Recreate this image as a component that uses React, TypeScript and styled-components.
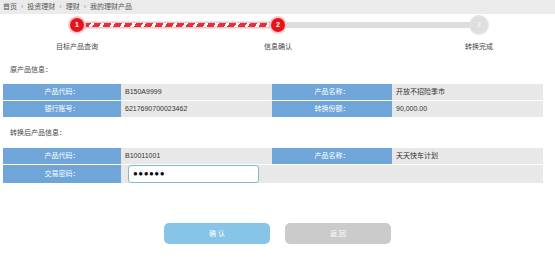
import { Fragment } from "react";
import styled, { createGlobalStyle } from "styled-components";

const GlobalStyle = createGlobalStyle`
  body {
    margin: 0;
    background: #fff;
    font-family: "Liberation Sans", "Noto Sans CJK SC", sans-serif;
    font-size: 7px;
    color: #444;
  }
`;

const Page = styled.div`
  width: 555px;
  height: 279px;
  overflow: hidden;
`;

const Breadcrumb = styled.div`
  height: 14px;
  line-height: 13px;
  background: #ebebeb;
  padding-left: 3px;
  color: #555;

  span.sep {
    margin: 0 4px;
    color: #999;
  }
`;

const StepRow = styled.div`
  display: flex;
  align-items: flex-start;
  padding: 4px 0 0 37px;
`;

const Step = styled.div`
  position: relative;
  z-index: 1;
  width: 80px;
  display: flex;
  flex-direction: column;
  align-items: center;
`;

const Circle = styled.div<{ $done: boolean }>`
  width: ${(p) => (p.$done ? "14px" : "16px")};
  height: ${(p) => (p.$done ? "14px" : "16px")};
  margin-top: ${(p) => (p.$done ? "0" : "-1px")};
  border-radius: 50%;
  background: ${(p) => (p.$done ? "#e5141b" : "#dedede")};
  box-shadow: 0 0 0 2px ${(p) => (p.$done ? "#f7c9cb" : "#e3e3e3")};
  color: ${(p) => (p.$done ? "#fff" : "#f2f2f2")};
  font-size: 7px;
  font-weight: bold;
  line-height: ${(p) => (p.$done ? "14px" : "16px")};
  text-align: center;
`;

const StepLabel = styled.div<{ $done: boolean }>`
  margin-top: ${(p) => (p.$done ? "10px" : "9px")};
  line-height: 10px;
  color: #444;
  white-space: nowrap;
`;

const Segment = styled.div<{ $done: boolean }>`
  flex: none;
  width: 187px;
  margin: 0 -33px;
  height: ${(p) => (p.$done ? "4px" : "6px")};
  margin-top: ${(p) => (p.$done ? "5px" : "4px")};
  background: ${(p) =>
    p.$done
      ? "repeating-linear-gradient(120deg, #e3303a 0 6px, #fff 6px 9px)"
      : "#dddddd"};
  box-shadow: ${(p) => (p.$done ? "0 0 0 1.5px #f6c4c7" : "none")};
`;

const SectionTitle = styled.div<{ $top: number }>`
  margin: ${(p) => p.$top}px 0 0 10px;
  line-height: 10px;
  color: #444;
`;

const InfoTable = styled.div<{ $top: number }>`
  display: grid;
  grid-template-columns: 118px 151px 120px 151px;
  row-gap: 1px;
  margin: ${(p) => p.$top}px 0 0 3px;
  width: 540px;
`;

const Label = styled.div<{ $tall?: boolean }>`
  height: ${(p) => (p.$tall ? "18px" : "16px")};
  line-height: ${(p) => (p.$tall ? "18px" : "16px")};
  background: #6fa5d8;
  color: #fff;
  text-align: center;
`;

const Value = styled.div<{ $span?: number; $tall?: boolean }>`
  grid-column: span ${(p) => p.$span ?? 1};
  height: ${(p) => (p.$tall ? "18px" : "16px")};
  line-height: 16px;
  background: #e8e8e8;
  color: #333;
  padding-left: 4px;
  display: flex;
  align-items: center;
`;

const PasswordBox = styled.div`
  box-sizing: border-box;
  width: 131px;
  height: 18px;
  margin-left: 3px;
  background: #fff;
  border: 1px solid #86b9c9;
  border-radius: 3px;
  padding-left: 4px;
  font-size: 8px;
  letter-spacing: 0.5px;
  line-height: 16px;
  color: #111;
`;

const Buttons = styled.div`
  display: flex;
  justify-content: center;
  gap: 15px;
  margin-top: 40px;
`;

const Button = styled.div<{ $primary?: boolean }>`
  width: 106px;
  height: 21px;
  line-height: 21px;
  border-radius: 5px;
  text-align: center;
  color: #fff;
  background: ${(p) => (p.$primary ? "#86c5e6" : "#cbcbcb")};
`;

const steps = [
  { n: 1, label: "目标产品查询", done: true },
  { n: 2, label: "信息确认", done: true },
  { n: 3, label: "转换完成", done: false },
];

export default function App() {
  return (
    <Page>
      <GlobalStyle />
      <Breadcrumb>
        首页<span className="sep">›</span>投资理财<span className="sep">›</span>理财
        <span className="sep">›</span>我的理财产品
      </Breadcrumb>

      <StepRow>
        {steps.map((s, i) => (
          <Fragment key={s.n}>
            {i > 0 && <Segment $done={s.done} />}
            <Step>
              <Circle $done={s.done}>{s.n}</Circle>
              <StepLabel $done={s.done}>{s.label}</StepLabel>
            </Step>
          </Fragment>
        ))}
      </StepRow>

      <SectionTitle $top={13}>原产品信息：</SectionTitle>
      <InfoTable $top={9}>
        <Label>产品代码：</Label>
        <Value>B150A9999</Value>
        <Label>产品名称：</Label>
        <Value>开放不招险季市</Value>
        <Label>银行账号：</Label>
        <Value>6217690700023462</Value>
        <Label>转换份额：</Label>
        <Value>90,000.00</Value>
      </InfoTable>

      <SectionTitle $top={11}>转换后产品信息：</SectionTitle>
      <InfoTable $top={10}>
        <Label>产品代码：</Label>
        <Value>B10011001</Value>
        <Label>产品名称：</Label>
        <Value>天天快车计划</Value>
        <Label $tall>交易密码：</Label>
        <Value $tall>
          <PasswordBox>●●●●●●</PasswordBox>
        </Value>
        <Value $span={2} $tall />
      </InfoTable>

      <Buttons>
        <Button $primary>确 认</Button>
        <Button>返 回</Button>
      </Buttons>
    </Page>
  );
}
